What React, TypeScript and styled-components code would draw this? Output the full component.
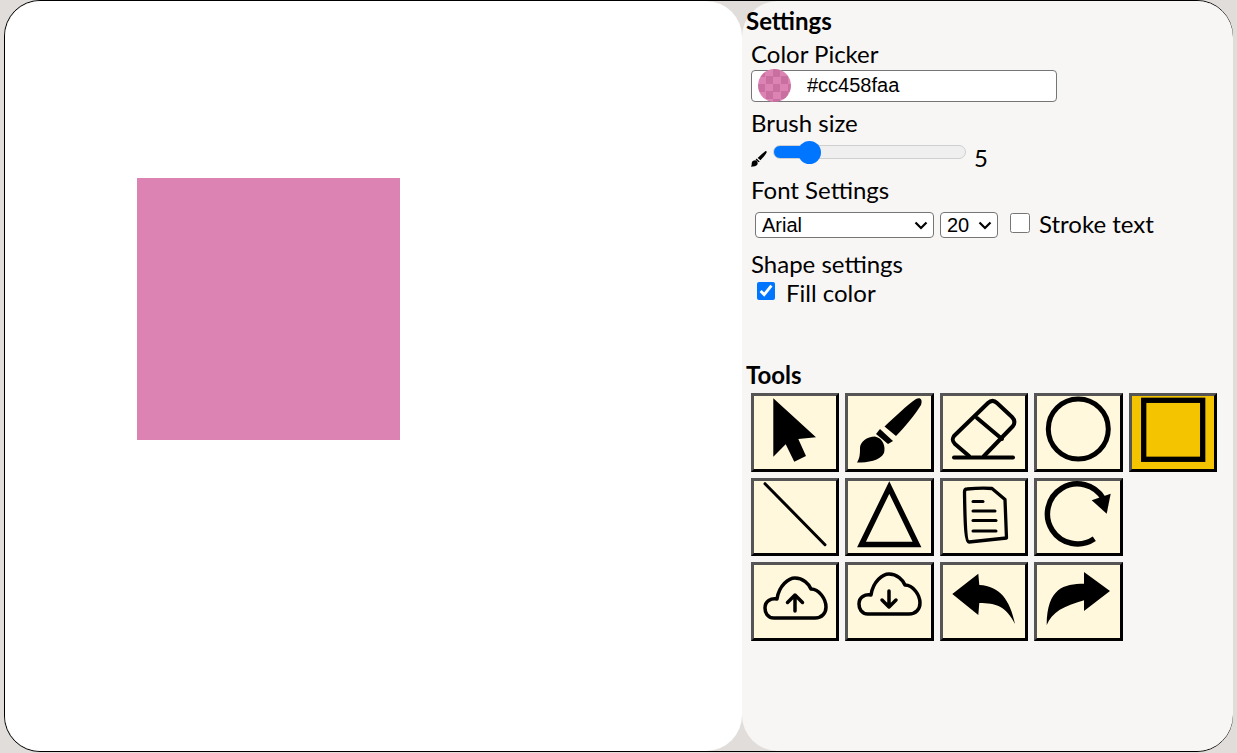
import React from "react";
import styled, { createGlobalStyle } from "styled-components";

const GlobalStyle = createGlobalStyle`
  html, body {
    margin: 0;
    padding: 0;
    background: #e0dddb;
    overflow: hidden;
  }
  body {
    font-family: "Lato", "Liberation Sans", sans-serif;
    color: #000;
  }
`;

const Frame = styled.div`
  display: flex;
  box-sizing: border-box;
  height: 752px;
  margin: 0 4px;
  border: 1px solid #000;
  border-radius: 36px;
`;

const Canvas = styled.div`
  position: relative;
  width: 737px;
  flex: none;
  background: #fff;
  border-radius: 36px;
`;

const Rectangle = styled.div`
  position: absolute;
  left: 132px;
  top: 177px;
  width: 263px;
  height: 262px;
  background: #dc83b4;
`;

const Sidebar = styled.aside`
  flex: 1;
  margin-right: -1px;
  padding: 6px 0 0 4px;
  background: #f8f6f4;
  border-radius: 36px;
`;

const Heading = styled.h2`
  margin: 0;
  font-size: 24px;
  line-height: 28px;
  font-weight: 700;
`;

const Section = styled.section`
  margin-left: 5px;
`;

const Label = styled.div`
  font-size: 24px;
  line-height: 29px;
`;

const PickerLabel = styled(Label)`
  margin-top: 4px;
`;

const ColorField = styled.div`
  position: relative;
  width: 306px;
  height: 32px;
  margin: 2px 0 6px;
`;

const ColorInput = styled.input`
  box-sizing: border-box;
  width: 100%;
  height: 100%;
  padding: 0 0 2px 55px;
  border: 1px solid #767676;
  border-radius: 4px;
  background: #fff;
  font: 20px "Liberation Sans", Arial, sans-serif;
  color: #000;
`;

const Swatch = styled.span`
  position: absolute;
  left: 7px;
  top: -1px;
  width: 33px;
  height: 33px;
  border-radius: 50%;
  background:
    linear-gradient(#cc458faa, #cc458faa),
    repeating-conic-gradient(#fff 0 25%, #c4c4c4 0 50%) 0 0 / 15px 15px;
`;

const SliderRow = styled.div`
  display: flex;
  align-items: center;
  height: 28px;
  margin: 4px 0 6px;
`;

const SmallIcon = styled.svg`
  width: 16px;
  height: 16px;
  margin-top: 8px;
  flex: none;
`;

const Range = styled.input<{ $fill: number }>`
  appearance: none;
  width: 193px;
  height: 24px;
  margin: -6px 8px 0 6px;
  background: transparent;

  &::-webkit-slider-runnable-track {
    height: 14px;
    box-sizing: border-box;
    border: 1px solid #cfcfcf;
    border-radius: 7px;
    background: linear-gradient(
      to right,
      #0075ff ${(p) => p.$fill}%,
      #efefef ${(p) => p.$fill}%
    );
  }
  &::-webkit-slider-thumb {
    appearance: none;
    width: 23px;
    height: 23px;
    margin-top: -5.5px;
    border-radius: 50%;
    background: #0075ff;
  }
`;

const SliderValue = styled.span`
  font-size: 24px;
  line-height: 29px;
  margin-top: 4px;
`;

const FontRow = styled.div`
  display: flex;
  align-items: center;
  height: 32px;
  margin: 5px 0 8px 4px;
`;

const chevron = encodeURIComponent(
  '<svg xmlns="http://www.w3.org/2000/svg" width="14" height="9"><path d="M1.500 1.500L7 7L12.500 1.500" fill="none" stroke="#000" stroke-width="2.200"/></svg>'
);

const Select = styled.select<{ $width: number }>`
  appearance: none;
  box-sizing: border-box;
  width: ${(p) => p.$width}px;
  height: 26px;
  margin-right: 6px;
  padding: 0 0 0 6px;
  border: 1px solid #767676;
  border-radius: 4px;
  background: #fff url("data:image/svg+xml,${chevron}") no-repeat right 5px center;
  font: 20px "Liberation Sans", Arial, sans-serif;
  color: #000;
`;

const Check = styled.input<{ $size: number }>`
  width: ${(p) => p.$size}px;
  height: ${(p) => p.$size}px;
  margin: 0 ${(p) => 29 - p.$size}px 0 6px;
  accent-color: #0075ff;
  flex: none;
`;

const CheckLabel = styled.label`
  display: flex;
  align-items: center;
  font-size: 24px;
  line-height: 29px;
`;

const StrokeLabel = styled(CheckLabel)`
  margin-top: -4px;
`;

const FillRow = styled(CheckLabel)`
  margin-bottom: 54px;
  input {
    margin-top: -4px;
  }
`;

const ToolGrid = styled.div`
  display: grid;
  grid-template-columns: repeat(5, 88.4px);
  column-gap: 6px;
  row-gap: 6px;
  margin: 4px 0 0;
`;

const ToolButton = styled.button<{ $active?: boolean }>`
  box-sizing: border-box;
  width: 88.4px;
  height: 78.500px;
  padding: 0;
  border-width: 3px;
  border-style: solid;
  border-color: #555 #000 #000 #555;
  border-radius: 0;
  background: ${(p) => (p.$active ? "#f5c400" : "#fff8dc")};
  display: block;
`;

const ToolIcon = styled.svg`
  display: block;
  width: 100%;
  height: 100%;
`;

const Line = styled.path`
  fill: none;
  stroke: #000;
  stroke-linecap: round;
  stroke-linejoin: round;
`;

const brushPaths = (
  <>
    <path d="M71 6C75 4 78 6 76 12C70 22 60 34 51 43L39.500 33.500C50 24 62 12 71 6Z" />
    <path d="M35 36L48 48L43 51L31 41Z" />
    <path d="M30 43.500C38 45 41 54 39 60C35 68 23 69.500 12 69.500C15 65 15 60 15 55C15 49 22 43.500 30 43.500Z" />
  </>
);

const Icon: React.FC<{ children: React.ReactNode }> = ({ children }) => (
  <ToolIcon viewBox="3 3 82.4 72.500">{children}</ToolIcon>
);

export default function App() {
  return (
    <>
      <GlobalStyle />
      <Frame>
        <Canvas>
          <Rectangle />
        </Canvas>
        <Sidebar>
          <Heading>Settings</Heading>
          <Section>
            <PickerLabel>Color Picker</PickerLabel>
            <ColorField>
              <ColorInput readOnly value="#cc458faa" />
              <Swatch />
            </ColorField>
            <Label>Brush size</Label>
            <SliderRow>
              <SmallIcon viewBox="12 5 66 66">{brushPaths}</SmallIcon>
              <Range type="range" min={1} max={29} defaultValue={5} $fill={19} />
              <SliderValue>5</SliderValue>
            </SliderRow>
            <Label>Font Settings</Label>
            <FontRow>
              <Select $width={179} defaultValue="Arial">
                <option>Arial</option>
              </Select>
              <Select $width={58} defaultValue="20">
                <option>20</option>
              </Select>
              <StrokeLabel>
                <Check type="checkbox" $size={20} />
                Stroke text
              </StrokeLabel>
            </FontRow>
            <Label>Shape settings</Label>
            <FillRow>
              <Check type="checkbox" defaultChecked $size={18} />
              Fill color
            </FillRow>
          </Section>
          <Heading>Tools</Heading>
          <Section>
            <ToolGrid>
              <ToolButton>
                <Icon>
                  <path d="M22.300 5.300L65 44.300L47.300 46L55 63L43.300 68.700L34.700 51.300L22.300 63.700Z" />
                </Icon>
              </ToolButton>
              <ToolButton>
                <Icon>{brushPaths}</Icon>
              </ToolButton>
              <ToolButton>
                <Icon>
                  <Line strokeWidth={4} d="M29 63L15 51C12 48 12 46 14 43L48 10C51 7 54 7 57 10L72 24C75 27 75 30 73 33L44 63" />
                  <Line strokeWidth={4} d="M37 25L62 46" />
                  <Line strokeWidth={4} d="M14 64.500H73" />
                </Icon>
              </ToolButton>
              <ToolButton>
                <Icon>
                  <circle cx="44.300" cy="36" r="30" fill="none" stroke="#000" strokeWidth="5" />
                </Icon>
              </ToolButton>
              <ToolButton $active>
                <Icon>
                  <rect x="14.700" y="7.300" width="59" height="59" fill="none" stroke="#000" strokeWidth="5.300" />
                </Icon>
              </ToolButton>
              <ToolButton>
                <Icon>
                  <Line strokeWidth={3} d="M14 5.700L74 66.700" />
                </Icon>
              </ToolButton>
              <ToolButton>
                <Icon>
                  <path d="M44.300 9.500L16.500 66.500H72Z" fill="none" stroke="#000" strokeWidth="5.500" />
                </Icon>
              </ToolButton>
              <ToolButton>
                <Icon>
                  <Line strokeWidth={3.300} d="M27 11C38 10 46 10 52 10.500L65 21.500L66.500 60L29 64C26 64 25 50 24.500 14C24.500 12 25 11 27 11Z" />
                  <Line strokeWidth={3} d="M33 23.500H43" />
                  <Line strokeWidth={3} d="M33 33H55" />
                  <Line strokeWidth={3} d="M33 42.500H56" />
                  <Line strokeWidth={3} d="M33 53H56" />
                </Icon>
              </ToolButton>
              <ToolButton>
                <Icon>
                  <path d="M60.300 60.700A30 30 0 1 1 69.300 20.700" fill="none" stroke="#000" strokeWidth="5.500" />
                  <path d="M76.700 15.700L72.700 35.700L57.700 22.300Z" />
                </Icon>
              </ToolButton>
              <span />
              <ToolButton>
                <Icon>
                  <Line strokeWidth={3.500} d="M23 56C16 56 14 50 14 46C14 39 20 36 26 37C28 23 38 16 44 16C52 16 58 22 60 27C68 27 75 37 75 45C75 51 71 56 64 56Z" />
                  <Line strokeWidth={3.500} d="M44 49V33M36.500 40.500L44 33L51.500 40.500" />
                </Icon>
              </ToolButton>
              <ToolButton>
                <Icon>
                  <Line strokeWidth={3.500} d="M23 52C16 52 14 46 14 42C14 35 20 32 26 33C28 19 38 12 44 12C52 12 58 18 60 23C68 23 75 33 75 41C75 47 71 52 64 52Z" />
                  <Line strokeWidth={3.500} d="M44 29V45M37 38L44 45L51 38" />
                </Icon>
              </ToolButton>
              <ToolButton>
                <Icon>
                  <path d="M12.300 32L38.300 11.700L39.300 23C60 24 70 38 75 62C66 44 56 41 39.300 41L38.300 53Z" />
                </Icon>
              </ToolButton>
              <ToolButton>
                <Icon>
                  <path d="M76 29L50 10V21.700C30 21.700 13 26 12.700 63C18 50 30 44 50 38.300V49Z" />
                </Icon>
              </ToolButton>
            </ToolGrid>
          </Section>
        </Sidebar>
      </Frame>
    </>
  );
}
